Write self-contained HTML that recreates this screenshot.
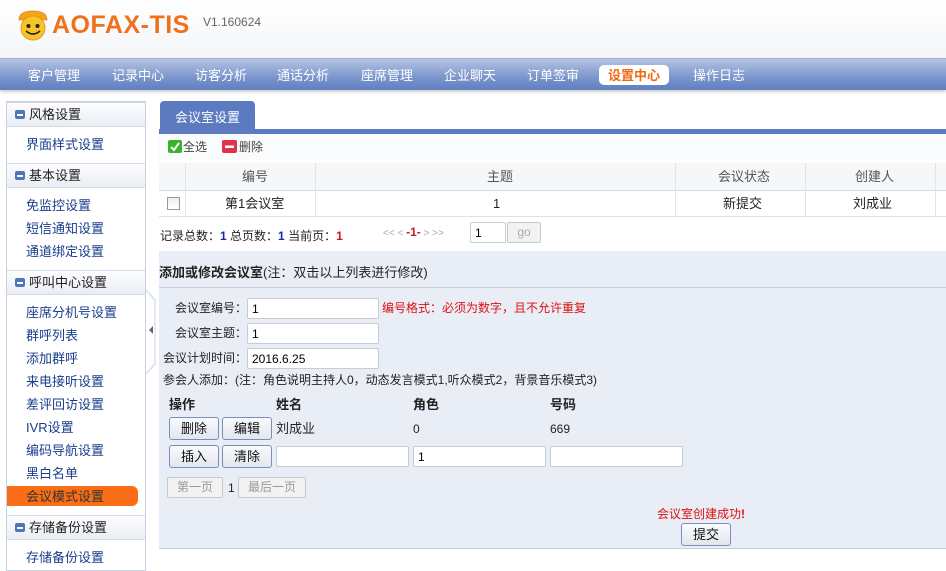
<!DOCTYPE html>
<html><head><meta charset="utf-8">
<style>
*{margin:0;padding:0;box-sizing:border-box}
body{width:946px;height:560px;overflow:hidden;background:#fff;font-family:"Liberation Sans","Noto Sans CJK SC",sans-serif;font-size:12px;color:#222;position:relative;line-height:1}
.a{position:absolute}
#hdr{left:0;top:0;width:946px;height:58px;background:linear-gradient(#fff,#f3f5f8)}
#nav{left:0;top:58px;width:946px;height:32px;background:linear-gradient(#b3c3e3,#7b95cc 60%,#5f7fc0);border-top:1px solid #9fb0d6;box-shadow:0 2px 3px #ccc}
#nav span{position:absolute;top:10px;color:#fff;font-size:13px}
#side{left:6px;top:101px;width:140px;height:470px;border:1px solid #c6d2e2;background:#fff}
.sh{position:absolute;left:0;width:138px;height:25px;background:linear-gradient(#fdfdfe,#e9edf3);border-top:1px solid #d4dbe6;border-bottom:1px solid #d4dbe6;font-size:13px;color:#222;padding:5px 0 0 22px}
.sh i{position:absolute;left:8px;top:7px;width:10px;height:9px;background:#4d75b8;border-radius:2px}
.sh i:after{content:"";position:absolute;left:2px;top:4px;width:6px;height:1.5px;background:#fff}
.si{position:absolute;left:19px;font-size:13px;color:#1a3e8c}
input.t{position:absolute;height:21px;border:1px solid #c8ccd4;background:#fff;font-size:12px;padding-left:4px;font-family:inherit;border-radius:2px}
.btn{position:absolute;height:23px;border:1px solid #7d8fb4;border-radius:3px;background:linear-gradient(#fafbfd,#e2e6ee);font-size:13px;text-align:center;line-height:21px;color:#111}
.dbtn{position:absolute;height:21px;border:1px solid #c5c8ce;border-radius:2px;background:#f2f2f2;color:#999;font-size:12px;text-align:center;line-height:19px}
</style></head><body>
<div id="hdr" class="a"></div>
<svg class="a" style="left:15px;top:8px" width="36" height="34" viewBox="0 0 36 34">
<path d="M4 12 Q4 3 18 3 Q32 3 32 12 L27 12 Q25 8 18 8 Q11 8 9 12Z" fill="#f2a41e" stroke="#e08a10" stroke-width="0.8"/>
<circle cx="18" cy="20" r="12" fill="#f8c526" stroke="#e89a14" stroke-width="1"/>
<circle cx="13.5" cy="18" r="2" fill="#222"/><circle cx="22.5" cy="18" r="2" fill="#222"/>
<path d="M11 23 Q18 29 25 23" stroke="#222" stroke-width="1.6" fill="none"/></svg>
<div class="a" style="left:52px;top:13px;font-size:25px;font-weight:bold;color:#f0711c;letter-spacing:0.5px">AOFAX-TIS</div>
<div class="a" style="left:203px;top:16px;font-size:12px;color:#666">V1.160624</div>
<div id="nav" class="a">
<span style="left:28px">客户管理</span><span style="left:112px">记录中心</span><span style="left:195px">访客分析</span><span style="left:277px">通话分析</span><span style="left:361px">座席管理</span><span style="left:444px">企业聊天</span><span style="left:527px">订单签审</span>
<div class="a" style="left:599px;top:6px;width:70px;height:20px;background:#fff;border-radius:5px"></div>
<span style="left:608px;color:#f06a10;font-weight:bold">设置中心</span><span style="left:693px">操作日志</span>
</div>
<div id="side" class="a">
<div class="sh" style="top:0">风格设置<i></i></div>
<div class="si" style="top:36px">界面样式设置</div>
<div class="sh" style="top:61px">基本设置<i></i></div>
<div class="si" style="top:97px">免监控设置</div><div class="si" style="top:120px">短信通知设置</div><div class="si" style="top:143px">通道绑定设置</div>
<div class="sh" style="top:168px">呼叫中心设置<i></i></div>
<div class="si" style="top:204px">座席分机号设置</div><div class="si" style="top:227px">群呼列表</div><div class="si" style="top:250px">添加群呼</div><div class="si" style="top:273px">来电接听设置</div><div class="si" style="top:296px">差评回访设置</div><div class="si" style="top:319px">IVR设置</div><div class="si" style="top:342px">编码导航设置</div><div class="si" style="top:365px">黑白名单</div>
<div class="a" style="left:0;top:384px;width:131px;height:20px;background:#f96e16;border-radius:0 6px 6px 0"></div>
<div class="si" style="top:388px;color:#333">会议模式设置</div>
<div class="sh" style="top:413px">存储备份设置<i></i></div>
<div class="si" style="top:449px">存储备份设置</div>
</div>
<svg class="a" style="left:145px;top:290px" width="12" height="84"><path d="M1 0 L10 10 L10 74 L1 84" stroke="#ccd4e0" fill="#fff"/><path d="M8 36 L4 40 L8 44Z" fill="#666"/></svg>
<div class="a" style="left:160px;top:101px;width:95px;height:29px;background:#5b7ac0;border-radius:4px 4px 0 0;color:#fff;font-size:13px;padding:10px 0 0 15px">会议室设置</div>
<div class="a" style="left:159px;top:129px;width:787px;height:5px;background:#5b7ac0"></div>
<div class="a" style="left:159px;top:134px;width:787px;height:26px;background:#fafbfc"></div>
<svg class="a" style="left:168px;top:140px" width="14" height="14"><rect width="14" height="13" rx="2" fill="#3bb12c"/><path d="M3 7 L6 10 L11 3" stroke="#fff" stroke-width="2" fill="none"/></svg>
<div class="a" style="left:183px;top:141px;color:#444">全选</div>
<svg class="a" style="left:222px;top:140px" width="15" height="14"><rect width="15" height="13" rx="2" fill="#e3334a"/><rect x="3" y="5.5" width="9" height="2.5" fill="#fff"/></svg>
<div class="a" style="left:239px;top:141px;color:#444">删除</div>
<div class="a" style="left:159px;top:163px;width:787px;height:54px;border-top:1px solid #dde3ec;border-bottom:1px solid #dde3ec"></div>
<div class="a" style="left:159px;top:163px;width:787px;height:27px;background:#f6f7f9"></div>
<div class="a" style="left:159px;top:190px;width:787px;height:1px;background:#cfd8e6"></div>
<div class="a" style="left:185px;top:163px;width:1px;height:54px;background:#e1e5ea"></div>
<div class="a" style="left:315px;top:163px;width:1px;height:54px;background:#e1e5ea"></div>
<div class="a" style="left:675px;top:163px;width:1px;height:54px;background:#e1e5ea"></div>
<div class="a" style="left:805px;top:163px;width:1px;height:54px;background:#e1e5ea"></div>
<div class="a" style="left:935px;top:163px;width:1px;height:54px;background:#e1e5ea"></div>
<div class="a" style="left:242px;top:170px;font-size:13px;color:#555">编号</div>
<div class="a" style="left:487px;top:170px;font-size:13px;color:#555">主题</div>
<div class="a" style="left:718px;top:170px;font-size:13px;color:#555">会议状态</div>
<div class="a" style="left:855px;top:170px;font-size:13px;color:#555">创建人</div>
<div class="a" style="left:167px;top:197px;width:13px;height:13px;border:1px solid #999;background:linear-gradient(#eee,#fff)"></div>
<div class="a" style="left:225px;top:197px;font-size:13px">第1会议室</div>
<div class="a" style="left:493px;top:197px;font-size:13px">1</div>
<div class="a" style="left:723px;top:197px;font-size:13px">新提交</div>
<div class="a" style="left:853px;top:197px;font-size:13px">刘成业</div>
<div class="a" style="left:160px;top:230px;font-size:12px">记录总数：<b style="color:#1a2a9c">1</b> 总页数：<b style="color:#1a2a9c">1</b> 当前页：<b style="color:#c51a1a">1</b></div>
<div class="a" style="left:383px;top:226px;font-size:10px;color:#aab">&lt;&lt; &lt; <b style="color:#c51a1a;font-size:12px">-1-</b> &gt; &gt;&gt;</div>
<input class="t" style="left:470px;top:222px;width:36px;height:21px" value="1">
<div class="dbtn" style="left:507px;top:222px;width:34px;height:21px;color:#aaa">go</div>
<div class="a" style="left:159px;top:251px;width:787px;height:298px;background:#e9eef6;border-bottom:1px solid #c8ced8"></div>
<div class="a" style="left:159px;top:287px;width:787px;height:1px;background:#c8d0dc"></div>
<div class="a" style="left:159px;top:266px;font-size:13px"><b>添加或修改会议室</b>(注：双击以上列表进行修改)</div>
<div class="a" style="left:175px;top:302px">会议室编号：</div><input class="t" style="left:247px;top:298px;width:132px" value="1">
<div class="a" style="left:382px;top:302px;color:#d11">编号格式：必须为数字，且不允许重复</div>
<div class="a" style="left:175px;top:327px">会议室主题：</div><input class="t" style="left:247px;top:323px;width:132px" value="1">
<div class="a" style="left:163px;top:352px">会议计划时间：</div><input class="t" style="left:247px;top:348px;width:132px" value="2016.6.25">
<div class="a" style="left:163px;top:374px">参会人添加：(注：角色说明主持人0，动态发言模式1,听众模式2，背景音乐模式3)</div>
<div class="a" style="left:169px;top:398px;font-weight:bold;font-size:13px">操作</div>
<div class="a" style="left:276px;top:398px;font-weight:bold;font-size:13px">姓名</div>
<div class="a" style="left:413px;top:398px;font-weight:bold;font-size:13px">角色</div>
<div class="a" style="left:550px;top:398px;font-weight:bold;font-size:13px">号码</div>
<div class="btn" style="left:169px;top:417px;width:50px">删除</div>
<div class="btn" style="left:222px;top:417px;width:50px">编辑</div>
<div class="a" style="left:276px;top:422px;font-size:13px">刘成业</div>
<div class="a" style="left:413px;top:423px">0</div>
<div class="a" style="left:550px;top:423px">669</div>
<div class="btn" style="left:169px;top:445px;width:50px">插入</div>
<div class="btn" style="left:222px;top:445px;width:50px">清除</div>
<input class="t" style="left:276px;top:446px;width:133px" value="">
<input class="t" style="left:413px;top:446px;width:133px" value="1">
<input class="t" style="left:550px;top:446px;width:133px" value="">
<div class="dbtn" style="left:167px;top:477px;width:56px">第一页</div>
<div class="a" style="left:228px;top:482px">1</div>
<div class="dbtn" style="left:238px;top:477px;width:68px">最后一页</div>
<div class="a" style="left:657px;top:508px;color:#d11">会议室创建成功<b>!</b></div>
<div class="btn" style="left:681px;top:523px;width:50px">提交</div>
</body></html>
